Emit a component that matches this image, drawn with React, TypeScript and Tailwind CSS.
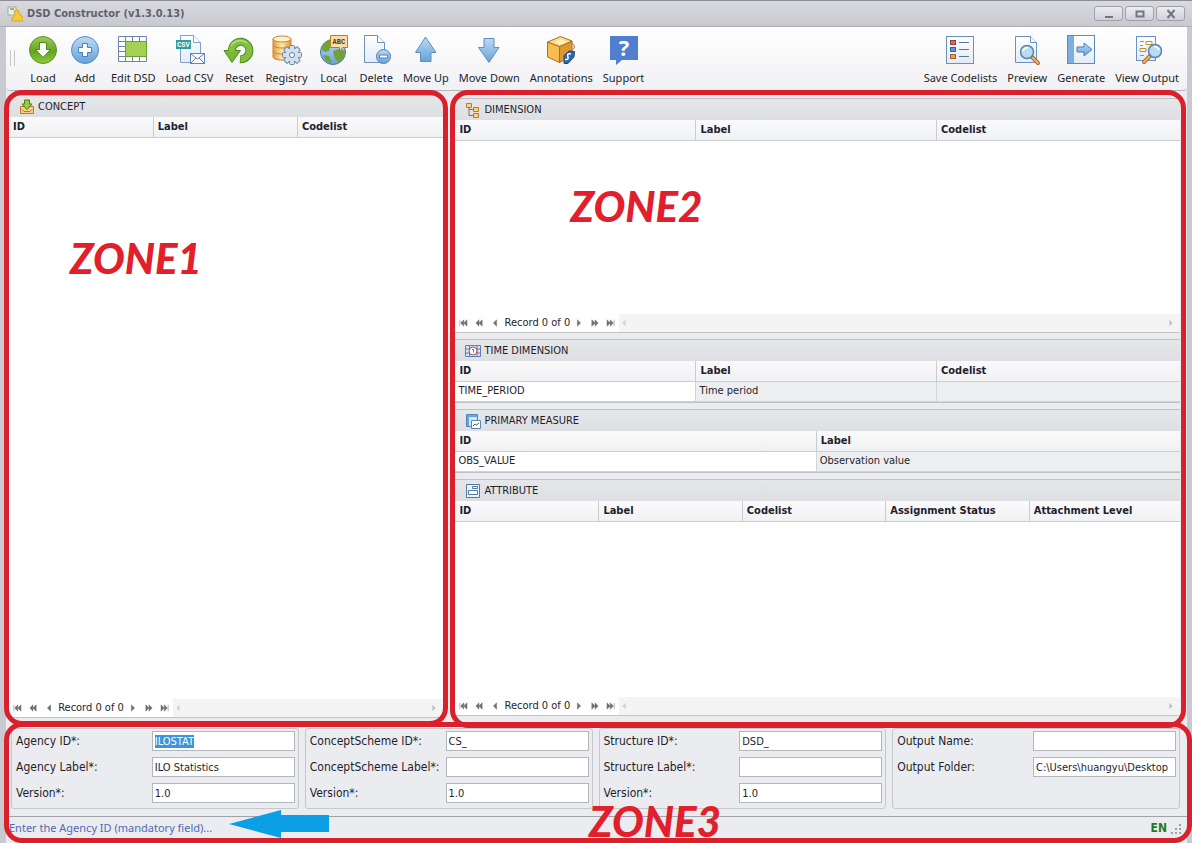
import React from 'react';

const GEAR_TEETH = [0, 45, 90, 135, 180, 225, 270, 315];

const Defs = () => (
  <svg width="0" height="0" className="absolute" aria-hidden="true">
    <defs>
      <linearGradient id="green" x1="0" y1="0" x2="0" y2="1">
        <stop offset="0" stopColor="#9fcb62" />
        <stop offset="0.55" stopColor="#63a51f" />
        <stop offset="1" stopColor="#8fcb3c" />
      </linearGradient>
      <linearGradient id="blue" x1="0" y1="0" x2="0" y2="1">
        <stop offset="0" stopColor="#bcdaf4" />
        <stop offset="1" stopColor="#66a3da" />
      </linearGradient>
      <linearGradient id="page" x1="0" y1="0" x2="0" y2="1">
        <stop offset="0" stopColor="#ffffff" />
        <stop offset="1" stopColor="#e3ebf8" />
      </linearGradient>
      <linearGradient id="gold" x1="0" y1="0" x2="1" y2="0">
        <stop offset="0" stopColor="#e79a3c" />
        <stop offset="0.5" stopColor="#fde9a8" />
        <stop offset="1" stopColor="#e0923a" />
      </linearGradient>
    </defs>
  </svg>
);

const Svg = ({ children }: { children: React.ReactNode }) => (
  <svg width="32" height="32" viewBox="0 0 32 32" className="overflow-visible" aria-hidden="true">
    {children}
  </svg>
);

const LoadIcon = () => (
  <Svg>
    <circle cx="16" cy="16" r="13.5" fill="url(#green)" stroke="#5a9422" />
    <path d="M12.5 8.500h7v7h4L16 23.500l-7.500-8h4z" fill="#fff" stroke="#4b8d12" />
  </Svg>
);
const AddIcon = () => (
  <Svg>
    <circle cx="16" cy="16" r="13.500" fill="url(#blue)" stroke="#5b8cc0" />
    <path d="M13.500 9.500h5v4h4v5h-4v4h-5v-4h-4v-5h4z" fill="#fff" stroke="#4a7fb8" />
  </Svg>
);
const EditIcon = () => (
  <Svg>
    <path d="M1.500 2.500h28v25h-28z" fill="#fff" stroke="#6c85a8" />
    <path d="M8.500 2.500v25M15.500 2.500v5M22.500 2.500v5M15.500 23v4.500M22.500 23v4.500M1.500 7.500h28M1.500 12.500h7M1.500 17.500h7M1.500 22.500h28" stroke="#6c85a8" fill="none" />
    <path d="M8.500 7.500h21v15h-21z" fill="#a3d155" stroke="#6f9f33" />
  </Svg>
);
const CsvIcon = () => (
  <Svg>
    <path d="M6.500 1.500h13l7 7v20h-20z" fill="url(#page)" stroke="#7f9ec8" />
    <path d="M19.500 1.500v7h7" fill="#fff" stroke="#7f9ec8" />
    <rect x="2" y="6" width="15" height="9" fill="#2f9da3" />
    <text x="3" y="13" fontSize="7" fontWeight="700" fill="#fff" fontFamily="Liberation Mono, monospace">CSV</text>
    <rect x="16.500" y="19.500" width="14" height="10" fill="#f7faff" stroke="#5f86bb" />
    <path d="M17 20l6.500 5L30 20M17 29l5-5M30 29l-5-5" fill="none" stroke="#5f86bb" />
  </Svg>
);
const ResetIcon = () => (
  <Svg>
    <path d="M9 17A8.700 8.700 0 1 1 17 25.200" fill="none" stroke="#4b8d12" strokeWidth="8" />
    <path d="M1 16.500h16.500L9 28.500z" fill="#79b833" stroke="#4b8d12" />
    <path d="M9 18A8.700 8.700 0 1 1 17.500 25.200" fill="none" stroke="#85bf42" strokeWidth="6" />
    <path d="M8 12A10.500 10.500 0 0 1 24 9" fill="none" stroke="#b9dd86" strokeWidth="1.500" />
  </Svg>
);
const RegistryIcon = () => (
  <Svg>
    <path d="M3 5v18c0 4 18 4 18 0V5z" fill="url(#gold)" stroke="#c98335" />
    <path d="M3 11c0 4 18 4 18 0M3 17c0 4 18 4 18 0" fill="none" stroke="#c98335" />
    <ellipse cx="12" cy="5" rx="9" ry="3" fill="#fff3cc" stroke="#c98335" />
    {GEAR_TEETH.map((a) => (
      <rect key={a} x="19.500" y="11.500" width="5" height="5" rx="1" fill="#d3dfee" stroke="#7287a4" transform={`rotate(${a} 22 21)`} />
    ))}
    <circle cx="22" cy="21" r="6.500" fill="#d3dfee" />
    <circle cx="22" cy="21" r="2.500" fill="#fff" stroke="#667c9c" />
  </Svg>
);
const LocalIcon = () => (
  <Svg>
    <circle cx="15" cy="18" r="12.500" fill="url(#blue)" stroke="#47729f" />
    <path d="M4 12c3-4 7-7 10-6l2 4-4 3-1 4-4 1-3-2zM15 17l6-2 6 2c0 6-3 10-6 12l-4-4zM5 21l6 1 3 7c-5 0-8-4-9-8z" fill="#6fa23a" />
    <path d="M12.500 1.500h17v12h-5l-3 4v-4h-9z" fill="#ffdda0" stroke="#b77c2c" />
    <text x="14.500" y="10" fontSize="7" fontWeight="700" fill="#573414" fontFamily="Liberation Mono, monospace">ABC</text>
  </Svg>
);
const DeleteIcon = () => (
  <Svg>
    <path d="M4.500 1.500h13l7 7v20h-20z" fill="url(#page)" stroke="#718fbd" />
    <path d="M17.500 1.500v7h7" fill="#fff" stroke="#718fbd" />
    <circle cx="23.500" cy="22.500" r="7" fill="url(#blue)" stroke="#4a7fb8" />
    <path d="M19.500 21h8v3h-8z" fill="#fff" stroke="#4a7fb8" />
  </Svg>
);
const UpIcon = () => (
  <Svg>
    <path d="M15.500 3L26 18.500h-5v9H10.500v-9h-5z" fill="url(#blue)" stroke="#5d8fbe" />
  </Svg>
);
const DownIcon = () => (
  <Svg>
    <path d="M11 4.500h10v9h5L16 28.500 5.500 13.500H11z" fill="url(#blue)" stroke="#5d8fbe" />
  </Svg>
);
const BoxIcon = () => (
  <Svg>
    <path d="M2.500 8l12 4.500v16L2.500 23z" fill="#f6bd50" stroke="#ad6e1c" />
    <path d="M14.500 12.500L27 7v15l-12.500 6.500z" fill="#dd9630" stroke="#ad6e1c" />
    <path d="M2.500 8l13-5.500L27 7l-12.500 5.500z" fill="#fcd981" stroke="#ad6e1c" />
    <path d="M16 5l6 3-7 3-6-3z" fill="#fff0b8" />
    <path d="M27 9c3.500 2 3 6-1 8" fill="none" stroke="#a0713f" />
    <path d="M19 21.500l5-4.500 5.500.5-.5 5.500-6 6.500h-4z" fill="#2f66ab" stroke="#234a80" />
    <path d="M26 20c-5-1.500-3 2.500-3 3s1 3-3 2.500" fill="none" stroke="#fff" strokeWidth="1.500" />
  </Svg>
);
const SupportIcon = () => (
  <Svg>
    <path d="M2 2h28v24H14l-6 5v-5H2z" fill="#4f7fce" />
    <text x="16" y="22" textAnchor="middle" fontSize="22" fontWeight="700" fill="#fff" fontFamily="Open Sans, sans-serif">?</text>
  </Svg>
);
const CodelistIcon = () => (
  <Svg>
    <rect x="2.500" y="2.500" width="27" height="27" fill="url(#page)" stroke="#6a90c4" />
    <rect x="6.500" y="6.500" width="5" height="4" fill="#e2664e" stroke="#974234" />
    <rect x="6.500" y="13.500" width="5" height="4" fill="#5a9bd4" stroke="#356597" />
    <rect x="6.500" y="20.500" width="5" height="4" fill="#f0a04b" stroke="#9d6328" />
    <path d="M15 8.500h10M15 15.500h10M15 22.500h10" stroke="#597594" />
  </Svg>
);
const Magnifier = ({ x, y }: { x: number; y: number }) => (
  <g transform={`translate(${x} ${y})`}>
    <path d="M4.500 4.500L11 11" stroke="#a96c2c" strokeWidth="4" strokeLinecap="round" />
    <path d="M5.500 5.500L11 11" stroke="#eeb267" strokeWidth="2" strokeLinecap="round" />
    <circle r="6.500" fill="#b9dcf4" stroke="#5b83ae" strokeWidth="1.500" />
    <path d="M-4-1A4 4 0 0 1 1-4" fill="none" stroke="#fff" strokeWidth="1.500" />
  </g>
);
const PreviewIcon = () => (
  <Svg>
    <path d="M4.500 2.500h15l6 6v20h-21z" fill="url(#page)" stroke="#6a90c4" />
    <path d="M19.500 2.500v6h6" fill="#fff" stroke="#6a90c4" />
    <Magnifier x={16} y={18} />
  </Svg>
);
const GenerateIcon = () => (
  <Svg>
    <rect x="2.500" y="1.500" width="27" height="28" fill="url(#page)" stroke="#5d8cc0" />
    <rect x="3" y="2" width="6" height="27" fill="#7cafdd" />
    <path d="M12 13h7V9l8 6.500-8 6.500v-4h-7z" fill="url(#blue)" stroke="#4a7fb8" />
  </Svg>
);
const OutputIcon = () => (
  <Svg>
    <rect x="5.500" y="2.500" width="19" height="24" fill="url(#page)" stroke="#6a90c4" />
    <path d="M9 7.500h4M9 11.500h3M15 7.500h6v3h-6zM9 14.500h6v3H9zM9 21.500h4" fill="none" stroke="#b39a2d" />
    <g transform="translate(46 0) scale(-1 1)">
      <Magnifier x={22} y={17} />
    </g>
  </Svg>
);

type Tool = { label: string; icon: () => React.JSX.Element };

const LEFT_TOOLS: Tool[] = [
  { label: 'Load', icon: LoadIcon },
  { label: 'Add', icon: AddIcon },
  { label: 'Edit DSD', icon: EditIcon },
  { label: 'Load CSV', icon: CsvIcon },
  { label: 'Reset', icon: ResetIcon },
  { label: 'Registry', icon: RegistryIcon },
  { label: 'Local', icon: LocalIcon },
  { label: 'Delete', icon: DeleteIcon },
  { label: 'Move Up', icon: UpIcon },
  { label: 'Move Down', icon: DownIcon },
  { label: 'Annotations', icon: BoxIcon },
  { label: 'Support', icon: SupportIcon },
];
const RIGHT_TOOLS: Tool[] = [
  { label: 'Save Codelists', icon: CodelistIcon },
  { label: 'Preview', icon: PreviewIcon },
  { label: 'Generate', icon: GenerateIcon },
  { label: 'View Output', icon: OutputIcon },
];

const ToolButton = ({ label, icon: Icon }: Tool) => (
  <button type="button" className="flex min-w-[30px] flex-col items-center gap-1 whitespace-nowrap">
    <Icon />
    <span className="text-[11px] leading-4">{label}</span>
  </button>
);

const SmallSvg = ({ children }: { children: React.ReactNode }) => (
  <svg width="16" height="16" viewBox="0 0 16 16" className="shrink-0" aria-hidden="true">
    {children}
  </svg>
);
const ConceptIcon = () => (
  <SmallSvg>
    <path d="M1.500 7.500h13v7h-13z" fill="#f8cf86" stroke="#b57a2a" />
    <path d="M3 10.500l2 2h6l2-2" fill="none" stroke="#b57a2a" />
    <path d="M5.500 1h5v4H13L8 10.500 3 5h2.500z" fill="#9dcb42" stroke="#4c7a1c" />
  </SmallSvg>
);
const TreeIcon = () => (
  <SmallSvg>
    <path d="M4 6v7.500h5M4 7.500h5" fill="none" stroke="#8a6d4c" />
    <path d="M1.500 1.500h5v4h-5zM8.500 5.500h5v4h-5zM8.500 11.500h5v4h-5z" fill="#fbd083" stroke="#b97a31" />
  </SmallSvg>
);
const TimeIcon = () => (
  <SmallSvg>
    <path d="M.5 2.500h15v11H.5z" fill="#dbe7f8" stroke="#5d7fb2" />
    <path d="M1 6h14M1 10h14M4.500 3v10M12 3v10" stroke="#5d7fb2" />
    <circle cx="8" cy="8" r="4" fill="#fff" stroke="#a84c5a" />
    <path d="M7 6.500h1.500v3" fill="none" stroke="#a84c5a" />
  </SmallSvg>
);
const MeasureIcon = () => (
  <SmallSvg>
    <path d="M1.500 1.500h11v12h-11z" fill="#d6e6f8" stroke="#4f86bf" />
    <path d="M2 2h10v2H2zM2 4h2v9H2z" fill="#69a3d9" />
    <path d="M6.500 7.500h9v8h-9z" fill="#fff" stroke="#5f86ae" />
    <path d="M8 13l2-2 1.500 1L14 10" fill="none" stroke="#2f6b57" />
  </SmallSvg>
);
const AttributeIcon = () => (
  <SmallSvg>
    <path d="M1.500 1.500h13v13h-13z" fill="#eaf3fb" stroke="#537ba8" />
    <path d="M3.500 7.500h9v4h-9zM7.500 3.500h5v2h-5z" fill="#fff" stroke="#537ba8" />
  </SmallSvg>
);

const Caption = ({ icon, title }: { icon: React.ReactNode; title: string }) => (
  <h2 className="flex h-[22px] shrink-0 items-center gap-[3px] border-t border-[#bfc0c6] bg-linear-to-b from-[#e6e7e9] to-[#dedfe3] pl-[10px] text-[11px] leading-4">
    {icon}
    {title}
  </h2>
);

type GridProps = { columns: string[]; width: string; rows?: string[][] };

const Grid = ({ columns, width, rows = [] }: GridProps) => (
  <table className="w-full table-fixed border-collapse text-left">
    <thead>
      <tr className="h-[20px] bg-linear-to-b from-[#fafafb] to-[#f0f1f3]">
        {columns.map((c, i) => (
          <th
            key={c}
            className={`overflow-hidden border-r border-b border-[#cbccd1] px-1 py-0 text-[11px] leading-4 whitespace-nowrap last:border-r-0 ${i < columns.length - 1 ? width : ''}`}
          >
            {c}
          </th>
        ))}
      </tr>
    </thead>
    <tbody>
      {rows.map((r) => (
        <tr key={r[0]} className="h-[20px]">
          {r.map((v, i) => (
            <td
              key={i}
              className="border-r border-b border-[#d3d4d9] bg-[#edeef0] px-[3px] py-0 text-[11px] leading-4 first:bg-white last:border-r-0"
            >
              {v}
            </td>
          ))}
        </tr>
      ))}
    </tbody>
  </table>
);

const NAV_BEFORE = [
  { name: 'First record', d: 'M1 1v8M6 1v8L2 5zM10 1v8L6 5z' },
  { name: 'Previous page', d: 'M5 1v8L1 5zM9 1v8L5 5z' },
  { name: 'Previous record', d: 'M7 1v8L3 5z' },
];
const NAV_AFTER = [
  { name: 'Next record', d: 'M3 1v8l4-4z' },
  { name: 'Next page', d: 'M1 1v8l4-4zM5 1v8l4-4z' },
  { name: 'Last record', d: 'M0 1v8l4-4zM4 1v8l4-4zM9 1v8' },
];

const NavButton = ({ name, d }: { name: string; d: string }) => (
  <button type="button" aria-label={name} className="flex w-4 justify-center">
    <svg width="10" height="8" viewBox="0 0 10 10">
      <path d={d} fill="#6f7074" stroke="#6f7074" strokeWidth="0.6" />
    </svg>
  </button>
);

const Navigator = () => (
  <div className="mt-auto flex h-[19px] shrink-0 items-center border-b border-[#c3c4ca] bg-[#f4f4f5] text-[11px] leading-4">
    <div className="flex h-full items-center bg-white">
      {NAV_BEFORE.map((b) => (
        <NavButton key={b.name} {...b} />
      ))}
      <span className="w-[68px] text-center whitespace-nowrap">Record 0 of 0</span>
      {NAV_AFTER.map((b) => (
        <NavButton key={b.name} {...b} />
      ))}
    </div>
    <svg width="10" height="8" viewBox="0 0 10 10" aria-hidden="true">
      <path d="M7 1v8L3 5z" fill="#cfcfd3" />
    </svg>
    <svg width="10" height="8" viewBox="0 0 10 10" className="mr-1 ml-auto" aria-hidden="true">
      <path d="M3 1v8l4-4z" fill="#bfbfc4" />
    </svg>
  </div>
);

type Field = { id: string; label: string; value: string };

const GROUPS: Field[][] = [
  [
    { id: 'agency-id', label: 'Agency ID*:', value: 'ILOSTAT' },
    { id: 'agency-label', label: 'Agency Label*:', value: 'ILO Statistics' },
    { id: 'agency-version', label: 'Version*:', value: '1.0' },
  ],
  [
    { id: 'scheme-id', label: 'ConceptScheme ID*:', value: 'CS_' },
    { id: 'scheme-label', label: 'ConceptScheme Label*:', value: '' },
    { id: 'scheme-version', label: 'Version*:', value: '1.0' },
  ],
  [
    { id: 'structure-id', label: 'Structure ID*:', value: 'DSD_' },
    { id: 'structure-label', label: 'Structure Label*:', value: '' },
    { id: 'structure-version', label: 'Version*:', value: '1.0' },
  ],
  [
    { id: 'output-name', label: 'Output Name:', value: '' },
    { id: 'output-folder', label: 'Output Folder:', value: 'C:\\Users\\huangyu\\Desktop' },
  ],
];

const FieldGroup = ({ fields }: { fields: Field[] }) => (
  <div className="flex flex-1 flex-col gap-[6px] rounded-[3px] border border-[#c6c7cd] pt-[2px] pr-[3px] pb-[5px] pl-1">
    {fields.map((f) => (
      <div key={f.id} className="flex items-center justify-between">
        <label htmlFor={f.id} className="text-[12px] leading-4 whitespace-nowrap">
          {f.label}
        </label>
        <input
          id={f.id}
          defaultValue={f.value}
          autoFocus={f.id === 'agency-id'}
          onFocus={(e) => e.target.select()}
          className="h-5 w-[143px] border border-[#b4b6be] bg-white px-[2px] text-[11px] leading-4 outline-none selection:bg-[#3a96dd] selection:text-white"
        />
      </div>
    ))}
  </div>
);

const Outline = ({ place }: { place: string }) => (
  <div className={`pointer-events-none absolute z-10 rounded-[18px] border-[5px] border-[#da202b] ${place}`} />
);

const ZoneName = ({ children, place }: { children: string; place: string }) => (
  <span className={`pointer-events-none absolute z-20 font-['Lato',sans-serif] text-[42px] leading-8 font-black text-[#e1202b] italic ${place}`}>
    {children}
  </span>
);

const WindowButton = ({ name, children }: { name: string; children: React.ReactNode }) => (
  <button
    type="button"
    aria-label={name}
    className="flex h-[15px] w-[29px] items-center justify-center rounded-[3px] border border-[#9fa0a8] bg-linear-to-b from-[#ededf0] to-[#d0d1d7]"
  >
    <svg width="12" height="10" viewBox="0 0 12 10" fill="none" stroke="#737580" strokeWidth="2">
      {children}
    </svg>
  </button>
);

export default function App() {
  return (
    <div className="flex min-h-screen flex-col border-t border-[#8d8e98] bg-[#c9cad1] font-['DejaVu_Sans_Condensed','DejaVu_Sans',sans-serif] text-[#1e1e2d]">
      <Defs />
      <header className="flex h-[26px] shrink-0 items-center gap-1 border-b border-[#aeafb7] bg-linear-to-b from-[#d9dade] to-[#c8c9cf] pr-[7px] pl-[7px]">
        <SmallSvg>
          <path d="M1 1h8v8H1z" fill="#e9efe4" stroke="#9dab95" />
          <path d="M3 3h4" stroke="#4b6b3c" />
          <path d="M7 5l4-1 2 5 3 2v4H5v-3l3-3z" fill="#f5cb35" stroke="#d6a62a" />
        </SmallSvg>
        <h1 className="text-[11px] leading-4 font-bold text-[#5f616c]">DSD Constructor (v1.3.0.13)</h1>
        <div className="ml-auto flex gap-[2px]">
          <WindowButton name="Minimize">
            <path d="M2 8h8" />
          </WindowButton>
          <WindowButton name="Maximize">
            <path d="M2.500 2.500h7v5h-7z" />
          </WindowButton>
          <WindowButton name="Close">
            <path d="M2.500 1l7 8M9.500 1l-7 8" />
          </WindowButton>
        </div>
      </header>

      <div className="mr-[5px] ml-[6px] flex flex-1 flex-col bg-[#ebecef]">
        <nav className="flex h-[64px] shrink-0 items-start rounded-b border-b border-[#b5b6bd] bg-linear-to-b from-white to-[#f1f1f4] pt-[7px] pr-2 pl-1 font-['Noto_Sans',sans-serif]">
          <div className="mt-4 mr-3 h-4 w-[5px] border-x border-[#c6c7cd]" />
          <div className="flex gap-[10px]">
            {LEFT_TOOLS.map((t) => (
              <ToolButton key={t.label} {...t} />
            ))}
          </div>
          <div className="ml-auto flex gap-[10px]">
            {RIGHT_TOOLS.map((t) => (
              <ToolButton key={t.label} {...t} />
            ))}
          </div>
        </nav>

        <main className="flex flex-1 gap-3 pr-[7px] pl-[3px]">
          <section className="relative flex w-[37.1%] flex-col pt-[4px] pb-[7px]">
            <div className="flex flex-1 flex-col bg-white">
              <Caption icon={<ConceptIcon />} title="CONCEPT" />
              <Grid columns={['ID', 'Label', 'Codelist']} width="w-[33.2%]" />
              <Navigator />
            </div>
            <Outline place="-inset-x-[5px] -top-px -bottom-px" />
            <ZoneName place="top-[151px] left-[61px]">ZONE1</ZoneName>
          </section>

          <section className="relative flex flex-1 flex-col gap-[6px] pt-[7px] pb-[9px]">
            <div className="flex h-[235px] flex-col bg-white">
              <Caption icon={<TreeIcon />} title="DIMENSION" />
              <Grid columns={['ID', 'Label', 'Codelist']} width="w-[33.2%]" />
              <Navigator />
            </div>
            <div className="h-[64px] border-b border-[#bfc0c6]">
              <Caption icon={<TimeIcon />} title="TIME DIMENSION" />
              <Grid columns={['ID', 'Label', 'Codelist']} width="w-[33.2%]" rows={[['TIME_PERIOD', 'Time period', '']]} />
            </div>
            <div className="h-[64px] border-b border-[#bfc0c6]">
              <Caption icon={<MeasureIcon />} title="PRIMARY MEASURE" />
              <Grid columns={['ID', 'Label']} width="w-[49.8%]" rows={[['OBS_VALUE', 'Observation value']]} />
            </div>
            <div className="flex flex-1 flex-col bg-white">
              <Caption icon={<AttributeIcon />} title="ATTRIBUTE" />
              <Grid
                columns={['ID', 'Label', 'Codelist', 'Assignment Status', 'Attachment Level']}
                width="w-[19.8%]"
              />
              <Navigator />
            </div>
            <Outline place="-left-[5px] -right-[6px] -top-px -bottom-[3px]" />
            <ZoneName place="top-[99px] left-[115px]">ZONE2</ZoneName>
          </section>
        </main>

        <footer className="relative flex shrink-0 flex-col">
          <form className="flex gap-[6px] pt-[3px] pr-[7px] pb-[7px] pl-[5px]">
            {GROUPS.map((g) => (
              <FieldGroup key={g[0].id} fields={g} />
            ))}
          </form>
          <div className="flex h-[27px] items-center border-t border-[#a2a3aa] pr-1 pb-1 pl-[3px] leading-4">
            <p className="font-['Noto_Sans',sans-serif] text-[11px] text-[#5069b5]">Enter the Agency ID (mandatory field)...</p>
            <span className="mr-1 ml-auto text-[12px] font-bold text-[#1f7a2b]">EN</span>
            <svg width="12" height="12" viewBox="0 0 12 12" fill="#a0a1a9" className="mt-1" aria-hidden="true">
              <path d="M8 0h2v2H8zM4 4h2v2H4zM8 4h2v2H8zM0 8h2v2H0zM4 8h2v2H4zM8 8h2v2H8z" />
            </svg>
          </div>
          <Outline place="-top-[3px] -right-[5px] bottom-0 -left-[2px]" />
          <svg width="100" height="30" viewBox="0 0 100 30" className="pointer-events-none absolute bottom-1 left-[223px] z-20" aria-hidden="true">
            <path d="M0 15L52 1v5h48v17H52v6z" fill="#0b9fe5" />
          </svg>
          <ZoneName place="bottom-[6px] left-[583px]">ZONE3</ZoneName>
        </footer>
      </div>
    </div>
  );
}
